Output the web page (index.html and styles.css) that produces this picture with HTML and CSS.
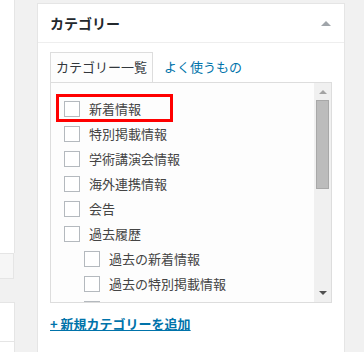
FILE: index.html
```html
<!DOCTYPE html>
<html>
  <head>
    <title>カテゴリー</title>
    <link rel="stylesheet" href="styles.css">
  </head>
  <body>
    <div id="side">
      <div class="side-a"></div>
      <div class="side-b"></div>
      <div class="side-c"></div>
      <div class="side-d"></div>
    </div>

    <div class="postbox">
      <div class="hndle">
        <h2>カテゴリー</h2>
        <span class="toggle"></span>
      </div>
      <div class="inside">
        <ul class="category-tabs">
          <li class="tabs">カテゴリー一覧</li>
          <li><a href="#">よく使うもの</a></li>
        </ul>
        <div class="tabs-panel">
          <ul class="checklist">
            <li class="marked">
              <label><input type="checkbox"> 新着情報</label>
              <span class="mark"></span>
            </li>
            <li><label><input type="checkbox"> 特別掲載情報</label></li>
            <li><label><input type="checkbox"> 学術講演会情報</label></li>
            <li><label><input type="checkbox"> 海外連携情報</label></li>
            <li><label><input type="checkbox"> 会告</label></li>
            <li><label><input type="checkbox"> 過去履歴</label>
              <ul class="children">
                <li><label><input type="checkbox"> 過去の新着情報</label></li>
                <li><label><input type="checkbox"> 過去の特別掲載情報</label></li>
                <li><label><input type="checkbox"> 過去の学術講演会情報</label></li>
              </ul>
            </li>
          </ul>
          <div class="scrollbar">
            <span class="arrow up"></span>
            <span class="thumb"></span>
            <span class="arrow down"></span>
          </div>
        </div>
        <h4 class="adder"><a href="#">+ 新規カテゴリーを追加</a></h4>
      </div>
    </div>
  </body>
</html>
```

FILE: styles.css
```css
* { padding: 0; margin: 0; box-sizing: border-box; }

body {
  background: #f1f1f1;
  display: flex;
  align-items: flex-start;
  gap: 22px;
  font-family: "Noto Sans CJK JP", "Noto Sans", sans-serif;
  font-size: 13px;
  color: #32373c;
  height: 352px;
  overflow: hidden;
}

ul { list-style: none; }
a { color: #0073aa; text-decoration: none; }

/* left column, edge of the main editor boxes */
#side { width: 15px; }

.side-a {
  height: 253px;
  background: #fff;
  border-right: 1px solid #e5e5e5;
}

.side-b {
  width: 14px;
  height: 26px;
  background: #f6f6f6;
  border: 1px solid #e5e5e5;
  border-left: none;
}

.side-c {
  margin-top: 23px;
  height: 40px;
  background: #fff;
  border-top: 1px solid #e5e5e5;
  border-right: 1px solid #e5e5e5;
  border-bottom: 1px solid #e5e5e5;
}

.side-d {
  height: 60px;
  background: #fff;
  border-right: 1px solid #e5e5e5;
}

/* category box */
.postbox {
  margin-top: 3px;
  width: 308px;
  height: 400px;
  background: #fff;
  border: 1px solid #e5e5e5;
}

.hndle {
  display: flex;
  align-items: center;
  justify-content: space-between;
  height: 39px;
  padding: 0 13px 0 12px;
  border-bottom: 1px solid #eee;
}

.hndle h2 {
  font-size: 14px;
  font-weight: 600;
  line-height: 20px;
  color: #23282d;
}

.toggle {
  width: 0;
  height: 0;
  border-left: 5px solid transparent;
  border-right: 5px solid transparent;
  border-bottom: 5px solid #a0a5aa;
  margin-top: 1px;
}

.inside { padding: 0 12px; }

.category-tabs {
  display: flex;
  gap: 5px;
  margin-top: 9px;
}

.category-tabs li {
  padding: 4px 5px 5px;
  line-height: 20px;
  border: 1px solid transparent;
  border-bottom: none;
}

.category-tabs li.tabs {
  background: #fdfdfd;
  border-color: #ddd;
}

.tabs-panel {
  display: flex;
  height: 221px;
  background: #fdfdfd;
  border: 1px solid #ddd;
  overflow: hidden;
}

.checklist {
  flex: 1;
  padding: 13px 0 0 13px;
  color: #444;
  overflow: hidden;
}

.checklist li { position: relative; }

.checklist label {
  display: flex;
  align-items: center;
  height: 25px;
  gap: 9px;
  white-space: nowrap;
}

.checklist input {
  appearance: none;
  width: 16px;
  height: 16px;
  background: #fff;
  border: 1px solid #b4b9be;
  flex: none;
}

.children { padding-left: 20px; }

.mark {
  position: absolute;
  left: -8px;
  top: -2px;
  width: 117px;
  height: 28px;
  border: 3px solid #ff0000;
}

/* fake scrollbar of the list */
.scrollbar {
  width: 17px;
  flex: none;
  background: #f0f0f0;
  display: flex;
  flex-direction: column;
  align-items: center;
}

.arrow {
  width: 0;
  height: 0;
  border-left: 4px solid transparent;
  border-right: 4px solid transparent;
}

.arrow.up {
  margin: 7px 0 6px;
  border-bottom: 4px solid #a3a3a3;
}

.arrow.down {
  margin: auto 0 7px;
  border-top: 4px solid #505050;
}

.thumb {
  width: 13px;
  height: 89px;
  background: #bcbcbc;
  border: 1px solid #a8a8a8;
}

.adder {
  margin-top: 11px;
  font-size: 13px;
  font-weight: 600;
  line-height: 20px;
}

.adder a { text-decoration: underline; }
```
